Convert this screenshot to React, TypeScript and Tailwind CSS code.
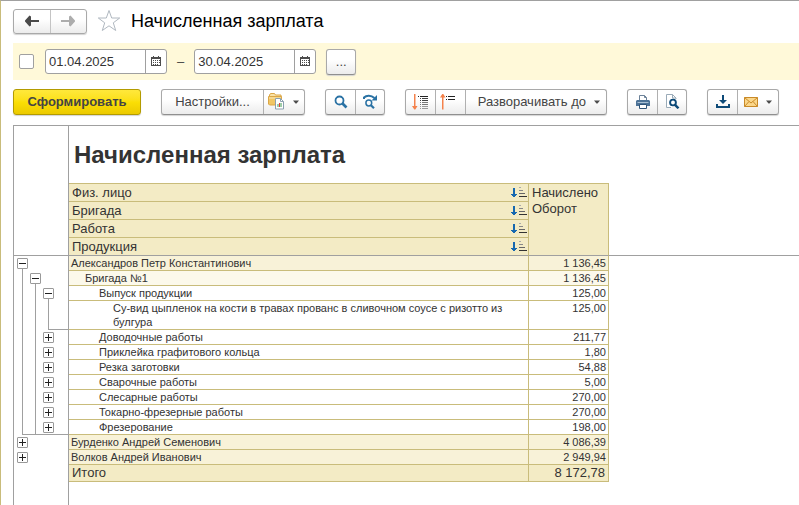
// src/App.tsx
import type { ReactNode } from 'react';
import clsx from 'clsx';

type Slot = 'plus' | 'minus' | 'line' | 'elbow' | null;

interface Row {
  name: string;
  value: string;
  level: 0 | 1 | 2 | 3;
  slots: [Slot, Slot, Slot];
}

const rows: Row[] = [
  { name: 'Александров Петр Константинович', value: '1 136,45', level: 0, slots: ['minus', null, null] },
  { name: 'Бригада №1', value: '1 136,45', level: 1, slots: ['line', 'minus', null] },
  { name: 'Выпуск продукции', value: '125,00', level: 2, slots: ['line', 'line', 'minus'] },
  {
    name: 'Су-вид цыпленок на кости в травах прованс в сливочном соусе с ризотто из булгура',
    value: '125,00',
    level: 3,
    slots: ['line', 'line', 'elbow'],
  },
  { name: 'Доводочные работы', value: '211,77', level: 2, slots: ['line', 'line', 'plus'] },
  { name: 'Приклейка графитового кольца', value: '1,80', level: 2, slots: ['line', 'line', 'plus'] },
  { name: 'Резка заготовки', value: '54,88', level: 2, slots: ['line', 'line', 'plus'] },
  { name: 'Сварочные работы', value: '5,00', level: 2, slots: ['line', 'line', 'plus'] },
  { name: 'Слесарные работы', value: '270,00', level: 2, slots: ['line', 'line', 'plus'] },
  { name: 'Токарно-фрезерные работы', value: '270,00', level: 2, slots: ['line', 'line', 'plus'] },
  { name: 'Фрезерование', value: '198,00', level: 2, slots: ['elbow', 'line', 'plus'] },
  { name: 'Бурденко Андрей Семенович', value: '4 086,39', level: 0, slots: ['plus', null, null] },
  { name: 'Волков Андрей Иванович', value: '2 949,94', level: 0, slots: ['plus', null, null] },
];

const groupings = ['Физ. лицо', 'Бригада', 'Работа', 'Продукция'];

const indents = ['pl-[2px]', 'pl-4', 'pl-[30px]', 'pl-11'];
const fills = ['bg-[#f8f2d8]', 'bg-[#fcf9eb]', 'bg-white', 'bg-white'];

const face = 'bg-linear-to-b from-white from-40% to-[#ececec]';

function Group({ children }: { children: ReactNode }) {
  return (
    <div
      className={clsx(
        'flex h-[26px] shrink-0 divide-x divide-[#b0b0b0] overflow-hidden rounded-[3px] border border-[#a9a9a9] border-b-[#8f8f8f] shadow-[0_1px_1px_#d4d4d4]',
        face,
      )}
    >
      {children}
    </div>
  );
}

function IconButton({ label, wide, children }: { label: string; wide?: boolean; children: ReactNode }) {
  return (
    <button
      type="button"
      aria-label={label}
      className={clsx('flex items-center justify-center', wide ? 'w-10 gap-2 pr-px' : 'w-[30px] last:w-7')}
    >
      {children}
    </button>
  );
}

function Caret() {
  return (
    <svg width="6" height="4" viewBox="0 0 6 4" className="shrink-0">
      <path d="M0 .5h6L3.500 3.500h-1z" fill="#4d4d4d" />
    </svg>
  );
}

function ArrowIcon({ forward }: { forward?: boolean }) {
  return (
    <svg width="14" height="12" viewBox="0 0 14 12">
      {forward ? (
        <path d="M0 5h8V1.500L9.500.5 14 5.500v1L9.500 11.500 8 10.500V7H0z" fill="#adadad" />
      ) : (
        <path d="M14 5H6V1.500L4.500.5 0 5.500v1L4.500 11.500 6 10.500V7h8z" fill="#4a4a4a" />
      )}
    </svg>
  );
}

function CalendarIcon() {
  return (
    <svg width="10" height="10" viewBox="0 0 10 10" shapeRendering="crispEdges">
      <path d="M0 1h2V0h1v1h4V0h1v1h2v9H0z" fill="#4d4d4d" />
      <path d="M1 3h8v6H1z" fill="#fff" />
      <path d="M2 4h1v1H2zM4 4h1v1H4zM6 4h1v1H6zM2 6h1v1H2zM4 6h1v1H4zM6 6h1v1H6zM8 4h1v1H8zM8 6h1v1H8zM2 8h1v1H2zM4 8h1v1H4zM6 8h1v1H6z" fill="#4d4d4d" />
    </svg>
  );
}

function SearchIcon() {
  return (
    <svg width="14" height="14" viewBox="0 0 14 14" fill="none" stroke="#2a72a4">
      <circle cx="5.500" cy="5.500" r="4" strokeWidth="1.800" />
      <path d="M8.500 8.500l4 4" strokeWidth="2.600" />
    </svg>
  );
}

function SearchNextIcon() {
  return (
    <svg width="15" height="16" viewBox="0 0 15 16" fill="none" stroke="#2a72a4">
      <path d="M1 5V3.500C3.500 1 8 1 11.500 4" strokeWidth="2" />
      <path d="M14 1v5.500H8.500z" fill="#2a72a4" stroke="none" />
      <circle cx="5.800" cy="9" r="2.900" strokeWidth="1.500" />
      <path d="M8 11.300l3 3" strokeWidth="2.200" />
    </svg>
  );
}

function VariantsIcon() {
  return (
    <svg width="17" height="17" viewBox="0 0 17 17">
      <path d="M1.500 4V2l1-1.500h4l1 1.500h5.500v2" fill="#f9e2a6" stroke="#dba646" />
      <path d="M.5 3.500h13v8.500h-12l-1-1z" fill="#f1c765" stroke="#dba646" />
      <path d="M1 5h12" stroke="#fbe9ba" />
      <path d="M7.500 5.500h5l3 3v7.500h-8z" fill="#fff" stroke="#8aa0b0" />
      <path d="M12.500 5.500v3h3" fill="none" stroke="#8aa0b0" />
      <path d="M10 11v3" stroke="#3f9a53" />
      <path d="M11.500 10v4" stroke="#e0453a" />
      <path d="M13 10v4" stroke="#3f9a53" />
    </svg>
  );
}

function ExpandIcon() {
  return (
    <svg width="17" height="16" viewBox="0 0 17 16">
      <path d="M2 0h1.500v12H5.500L3.300 15.500h-1L0 12h2z" fill="#f4824c" />
      <g shapeRendering="crispEdges">
        <path d="M6 2.500h1M8 2.500h8" stroke="#222" />
        <path d="M8 4.500h1M10 4.500h6M8 6.500h1M10 6.500h6" stroke="#444" />
        <path d="M8 8.500h1M10 8.500h6M8 10.500h1M10 10.500h6" stroke="#777" />
        <path d="M8 12.500h1M10 12.500h6M8 14.500h1M10 14.500h6" stroke="#999" />
      </g>
    </svg>
  );
}

function CollapseIcon() {
  return (
    <svg width="16" height="16" viewBox="0 0 16 16">
      <path d="M2.300 0h1l2.200 3.500h-2V15.500H2V3.500H0z" fill="#f4824c" />
      <g shapeRendering="crispEdges">
        <path d="M6 2.500h1M8 2.500h7" stroke="#222" />
        <path d="M6 5.500h1M8 5.500h7" stroke="#222" />
      </g>
    </svg>
  );
}

function PrinterIcon() {
  return (
    <svg width="14" height="14" viewBox="0 0 14 14">
      <path d="M3.500 6V.5h5l2 2V6" fill="#fff" stroke="#6c8299" />
      <path d="M8.500.5v2h2" fill="none" stroke="#6c8299" />
      <path d="M1 5h12l1 1v5H0V6z" fill="#4d7397" />
      <path d="M1.500 7.500h11" stroke="#a9c0d4" />
      <path d="M3.500 9.500h7v4h-7z" fill="#fff" stroke="#2f5478" />
    </svg>
  );
}

function PreviewIcon() {
  return (
    <svg width="15" height="15" viewBox="0 0 15 15" fill="none">
      <path d="M6 13.500H1.500V.5h6l3.500 3.500v1" fill="#fff" stroke="#9aabb8" />
      <path d="M7.500.5V4H11" stroke="#9aabb8" />
      <circle cx="8" cy="8.500" r="2.900" stroke="#0d4a78" strokeWidth="1.900" />
      <path d="M10 10.800l3.500 3.500" stroke="#0d4a78" strokeWidth="2.400" />
    </svg>
  );
}

function SaveIcon() {
  return (
    <svg width="14" height="13" viewBox="0 0 14 13">
      <path d="M6 0h2v5h3L7 9 3 5h3z" fill="#0d4a78" />
      <path d="M1 9v3h12V9" fill="none" stroke="#0d4a78" strokeWidth="2" />
    </svg>
  );
}

function MailIcon() {
  return (
    <svg width="14" height="10" viewBox="0 0 14 10" stroke="#c98a28">
      <path d="M.5.5h13v9H.5z" fill="#fbd78a" />
      <path d="M.5.5L7 6l6.500-5.500M.5 9.500l4.500-5M13.500 9.500L9 4.500" fill="none" />
    </svg>
  );
}

function SortIcon() {
  return (
    <svg width="16" height="11" viewBox="0 0 16 11" shapeRendering="crispEdges">
      <path d="M2 1h2v6h2v1H5v1H4v1H2V9H1V8H0V7h2z" fill="#1668b0" />
      <path d="M8 .5h2" stroke="#aaa" />
      <path d="M8 3.500h4" stroke="#888" />
      <path d="M8 6.500h6" stroke="#666" />
      <path d="M8 9.500h8" stroke="#333" />
    </svg>
  );
}

function DateField({ label, value }: { label: string; value: string }) {
  return (
    <div className="flex h-[25px] w-[122px] shrink-0 overflow-hidden rounded-[3px] border border-[#a0a0a0] bg-white">
      <input
        type="text"
        aria-label={label}
        defaultValue={value}
        className="w-[100px] min-w-0 border-r border-[#a0a0a0] pl-[3px] text-[13px] text-[#333] outline-none"
      />
      <button type="button" aria-label={`${label}: календарь`} className="flex flex-1 items-center justify-center pb-[2px]">
        <CalendarIcon />
      </button>
    </div>
  );
}

function TreeSlot({ kind }: { kind: Slot }) {
  if (kind === 'plus' || kind === 'minus') {
    return (
      <div className="flex w-[13px] flex-col items-center pt-[2px]">
        <button
          type="button"
          aria-label={kind === 'plus' ? 'Развернуть' : 'Свернуть'}
          className="flex size-[11px] shrink-0 items-center justify-center rounded-[1px] border border-[#999] bg-white"
        >
          <svg width="7" height="7" viewBox="0 0 7 7" stroke="#222" className="shrink-0">
            <path d={kind === 'plus' ? 'M0 3.500h7M3.500 0v7' : 'M0 3.500h7'} />
          </svg>
        </button>
        {kind === 'minus' && <span className="w-px flex-1 bg-[#a0a0a0]" />}
      </div>
    );
  }
  return (
    <div className="flex w-[13px] pl-[6px]">
      {kind && <div className={clsx('flex-1 border-l border-[#a0a0a0]', kind === 'elbow' && 'border-b')} />}
    </div>
  );
}

function ReportRow({ row }: { row: Row }) {
  const elbow = row.slots.indexOf('elbow');
  return (
    <tr className="align-top text-[11px] leading-[14px]">
      <td className="border-r border-[#a0a0a0] p-0">
        <div className={clsx('flex pl-[2px]', row.level === 3 ? 'h-[29px]' : 'h-[15px]')}>
          {row.slots.map((kind, i) => (
            <div key={i} className={clsx('flex border-[#a0a0a0]', elbow >= 0 && i > elbow && 'border-b')}>
              <TreeSlot kind={kind} />
            </div>
          ))}
          <div className={clsx('flex-1 border-[#a0a0a0]', elbow >= 0 && 'border-b')} />
        </div>
      </td>
      <td className={clsx('border-r border-b border-[#c9bc7b] py-0 pr-1', indents[row.level], fills[row.level])}>
        {row.name}
      </td>
      <td className={clsx('border-r border-b border-[#c9bc7b] py-0 pr-[2px] text-right', fills[row.level])}>
        {row.value}
      </td>
      <td />
    </tr>
  );
}

function Report() {
  return (
    <div className="flex flex-1 flex-col border-t border-l border-[#a0a0a0]">
      <table className="w-full table-fixed border-separate border-spacing-0 text-[#333]">
        <colgroup>
          <col className="w-[55px]" />
          <col className="w-[460px]" />
          <col className="w-20" />
          <col />
        </colgroup>
        <thead>
          <tr>
            <td rowSpan={5} className="border-r border-b border-[#a0a0a0]" />
            <td colSpan={2} className="h-[58px] border-b border-[#c9bc7b] py-0 pl-[5px]">
              <h1 className="text-2xl leading-6 font-bold">Начисленная зарплата</h1>
            </td>
            <td rowSpan={5} className="border-b border-[#a0a0a0]" />
          </tr>
          {groupings.map((name, i) => (
            <tr key={name} className="text-[13px] leading-[17px]">
              <th
                scope="col"
                className={clsx(
                  'border-r border-b border-r-[#c9bc7b] bg-[#f3ebc5] py-0 pr-px pl-[3px] text-left font-normal',
                  i === groupings.length - 1 ? 'border-b-[#a0a0a0]' : 'border-b-[#c9bc7b]',
                )}
              >
                <div className="flex items-center justify-between">
                  {name}
                  <SortIcon />
                </div>
              </th>
              {i === 0 && (
                <th
                  scope="col"
                  rowSpan={4}
                  className="border-r border-b border-r-[#c9bc7b] border-b-[#a0a0a0] bg-[#f3ebc5] pt-px pb-0 pl-[3px] text-left align-top leading-4 font-normal"
                >
                  Начислено
                  <br />
                  Оборот
                </th>
              )}
            </tr>
          ))}
        </thead>
        <tbody>
          {rows.map((row) => (
            <ReportRow key={row.name} row={row} />
          ))}
        </tbody>
        <tfoot>
          <tr className="text-[13px] leading-4">
            <td className="border-r border-[#a0a0a0] p-0" />
            <td className="border-r border-b border-[#c9bc7b] bg-[#f3ebc5] py-0 pl-[3px]">Итого</td>
            <td className="border-r border-b border-[#c9bc7b] bg-[#f3ebc5] py-0 pr-[3px] text-right">8 172,78</td>
            <td />
          </tr>
        </tfoot>
      </table>
      <div className="w-[55px] flex-1 border-r border-[#a0a0a0]" />
    </div>
  );
}

function App() {
  return (
    <div className="flex min-h-screen flex-col border-t border-l border-t-[#a0a0a0] border-l-[#c9bc7b] bg-white pl-3 font-['Liberation_Sans',Arial,sans-serif] text-[13px] text-[#444]">
      <header className="flex h-[42px] items-center pb-[2px]">
        <div
          className={clsx(
            'flex h-[25px] w-[74px] divide-x divide-[#c4c4c4] rounded-[3px] border border-[#a9a9a9] shadow-[0_1px_1px_#d4d4d4]',
            face,
          )}
        >
          <button type="button" aria-label="Назад" className="flex flex-1 items-center justify-center">
            <ArrowIcon />
          </button>
          <button type="button" aria-label="Вперед" className="flex flex-1 items-center justify-center">
            <ArrowIcon forward />
          </button>
        </div>
        <button type="button" aria-label="В избранное" className="ml-[10px]">
          <svg width="24" height="24" viewBox="0 0 24 24" fill="none" stroke="#b0b8c0">
            <path d="M12 1.500l2.700 7.500h8l-6.400 4.800 2.400 7.700-6.700-4.700-6.700 4.700 2.400-7.700L1.300 9h8z" />
          </svg>
        </button>
        <div className="ml-[10px] text-lg text-black">Начисленная зарплата</div>
      </header>

      <div className="flex h-[37px] items-center bg-[#fff9d9] pl-[6px]">
        <input
          type="checkbox"
          aria-label="Период"
          className="size-[15px] appearance-none rounded-[2px] border border-[#a0a0a0] bg-white"
        />
        <div className="ml-[11px] flex items-center gap-[10px]">
          <DateField label="Начало периода" value="01.04.2025" />
          <span>–</span>
          <DateField label="Конец периода" value="30.04.2025" />
          <Group>
            <button type="button" aria-label="Выбрать период" className="w-7 text-[13px]">
              ...
            </button>
          </Group>
        </div>
      </div>

      <div className="flex h-[45px] items-center gap-5 pb-[2px]">
        <button
          type="button"
          className="h-[26px] w-32 shrink-0 rounded-[3px] border border-[#b39b00] bg-linear-to-b from-[#ffe83b] via-[#fbdf05] to-[#ecca00] text-[13px] font-bold shadow-[0_1px_1px_#d4d4d4]"
        >
          Сформировать
        </button>
        <Group>
          <button type="button" className="w-[102px]">
            Настройки...
          </button>
          <IconButton label="Варианты отчета" wide>
            <VariantsIcon />
            <Caret />
          </IconButton>
        </Group>
        <Group>
          <IconButton label="Найти">
            <SearchIcon />
          </IconButton>
          <IconButton label="Найти далее">
            <SearchNextIcon />
          </IconButton>
        </Group>
        <Group>
          <IconButton label="Развернуть группы">
            <ExpandIcon />
          </IconButton>
          <button type="button" aria-label="Свернуть группы" className="flex w-[30px] items-center justify-start pl-1">
            <CollapseIcon />
          </button>
          <button type="button" className="flex w-[140px] items-center justify-end gap-2 pr-[6px]">
            Разворачивать до
            <Caret />
          </button>
        </Group>
        <Group>
          <IconButton label="Печать">
            <PrinterIcon />
          </IconButton>
          <IconButton label="Предварительный просмотр">
            <PreviewIcon />
          </IconButton>
        </Group>
        <Group>
          <IconButton label="Сохранить">
            <SaveIcon />
          </IconButton>
          <IconButton label="Отправить" wide>
            <MailIcon />
            <Caret />
          </IconButton>
        </Group>
      </div>

      <Report />
    </div>
  );
}

export default App;
